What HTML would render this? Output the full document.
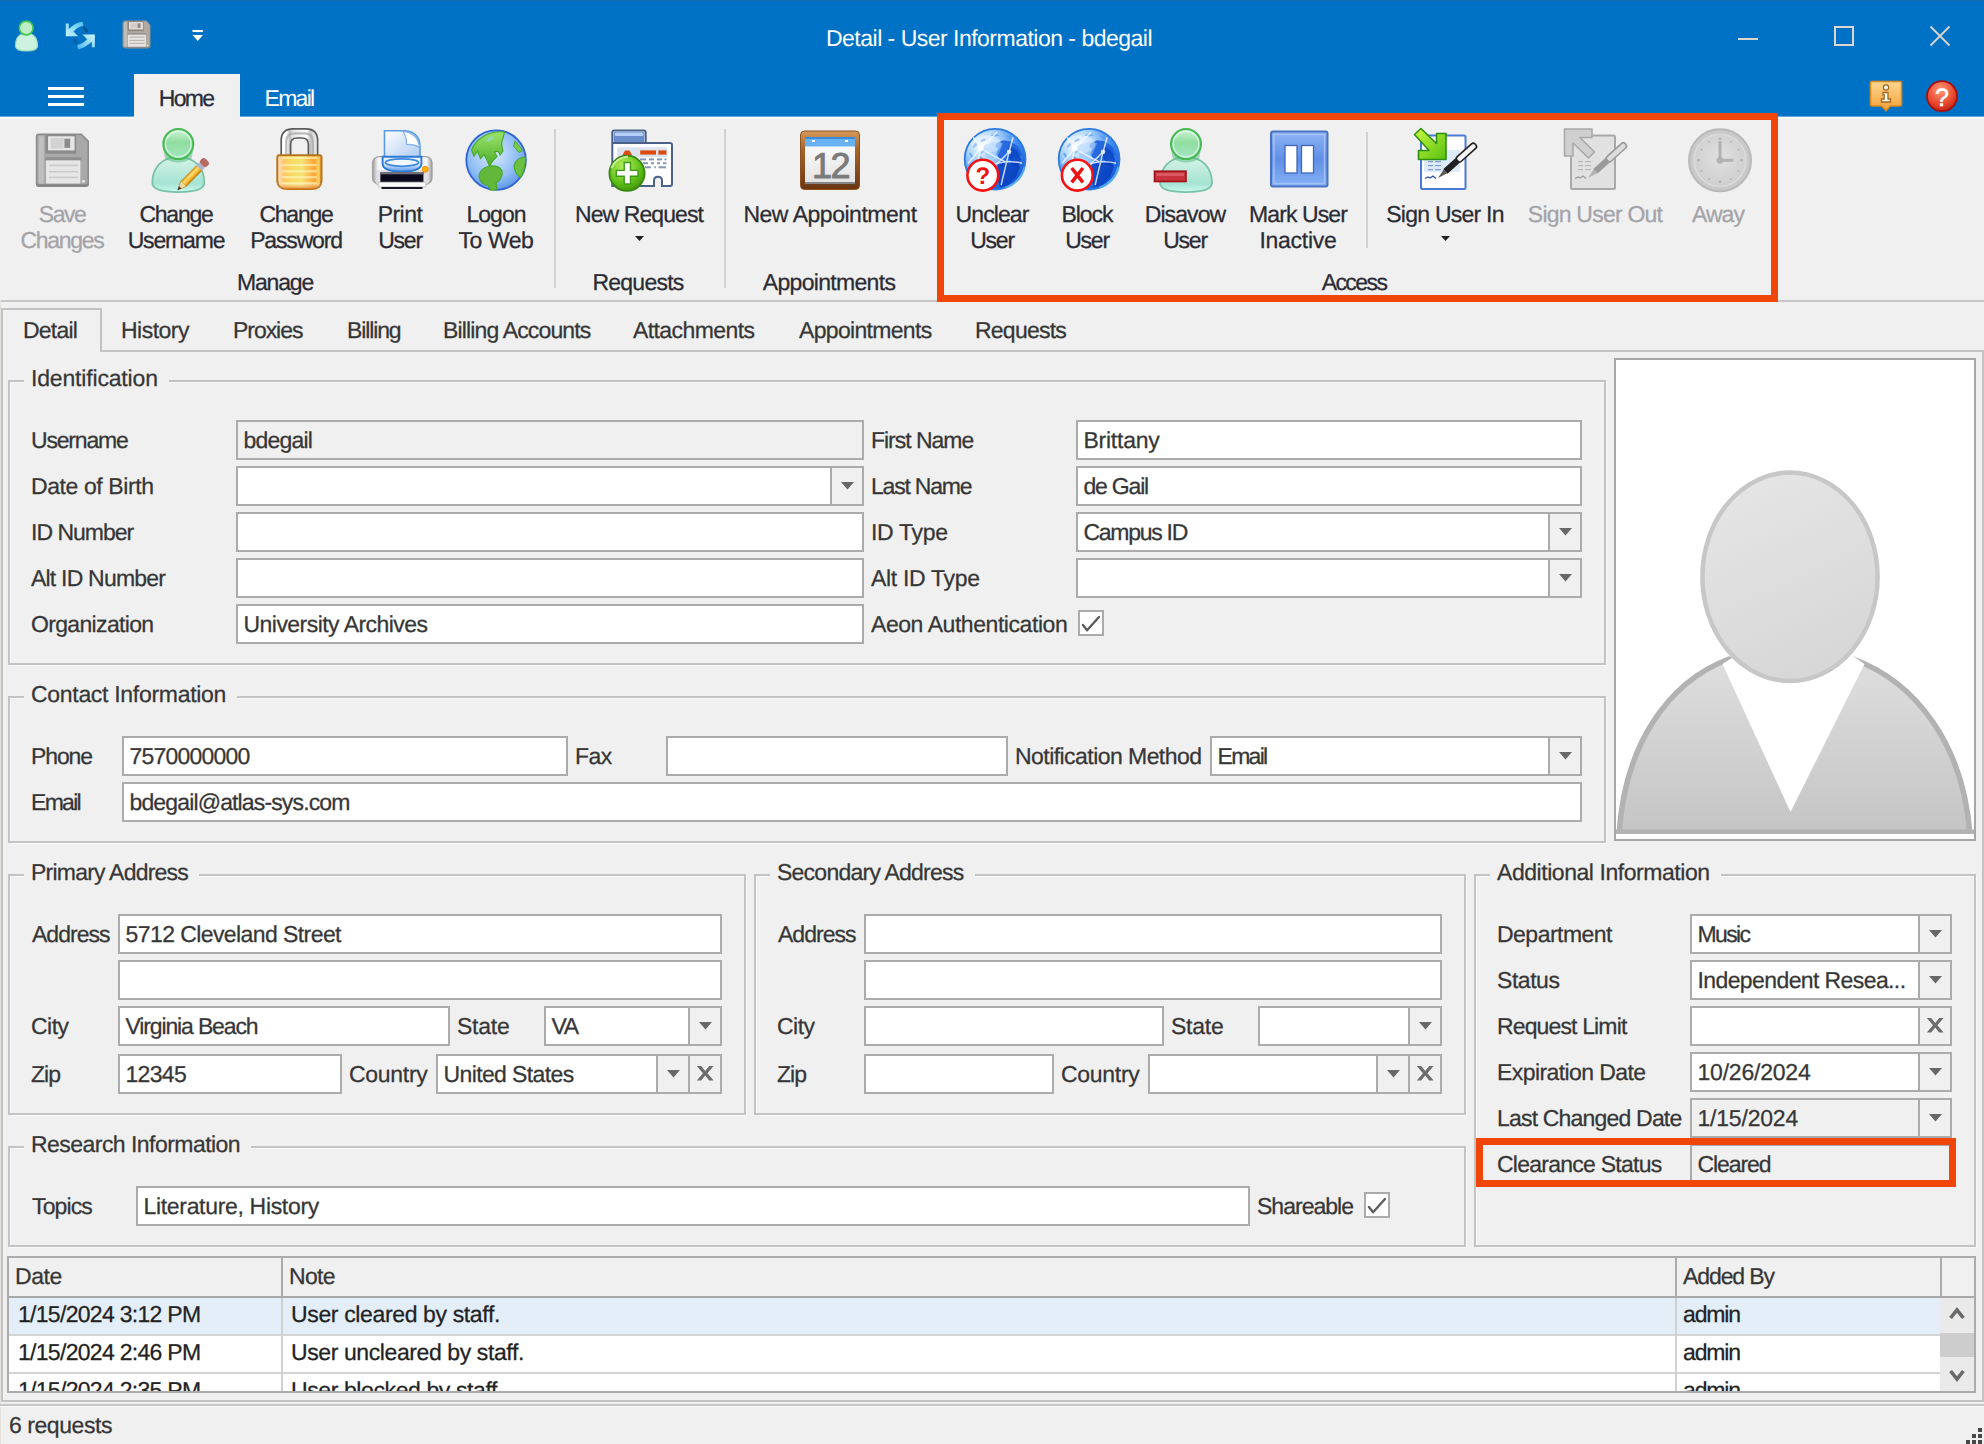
<!DOCTYPE html>
<html><head><meta charset="utf-8"><title>Detail - User Information - bdegail</title>
<style>
html,body{margin:0;padding:0;background:#f0f0f0;}
body{text-rendering:geometricPrecision;width:1984px;height:1444px;overflow:hidden;font-family:"Liberation Sans",sans-serif;}
#app{position:relative;width:1984px;height:1444px;overflow:hidden;background:#f0f0f0;font-size:23px;line-height:26px;color:#333;}
.t{position:absolute;white-space:nowrap;font-size:23px;line-height:26px;color:#363636;-webkit-text-stroke:0.25px currentColor;}
.t.c{text-align:center;}
.t.w{color:#fff;-webkit-text-stroke:0;}
.t.d{color:#a3a3a8;}
.t.gt{background:#f0f0f0;padding:0 11px 0 7px;margin-left:-7px;}
.r{position:absolute;}
.in{position:absolute;box-sizing:border-box;border:2px solid #ababab;background:#fff;}
.in.g{background:#f0f0f0;}
.gb{position:absolute;box-sizing:border-box;border:2px solid #c3c3c3;box-shadow:inset 1px 1px 0 #f8f8f8, 1px 1px 0 #f8f8f8;}
svg{display:block;overflow:visible;}
.t.rb{color:#2b2b33;}

</style></head>
<body>
<div id="app">
<div class="r" style="left:0px;top:0px;width:1984px;height:116px;background:#0072c6;"></div>
<div class="r" style="left:0px;top:0px;width:1984px;height:1px;background:#1a68ac;"></div>
<div class="t w c" style="left:789px;top:25.4px;width:400px;letter-spacing:-0.51px;">Detail - User Information - bdegail</div>
<div class="r" style="left:1738px;top:38px;width:20px;height:2px;background:#dcd6cf;"></div>
<div class="r" style="left:1834px;top:26px;width:16px;height:16px;border:2px solid #dcd6cf"></div>
<svg class="r" style="left:1930px;top:26px" width="20" height="20" viewBox="0 0 20 20"><path d="M0.5 0.5L19.5 19.5M19.5 0.5L0.5 19.5" stroke="#dcd6cf" stroke-width="1.8" fill="none"/></svg>
<div class="r" style="left:48px;top:87px;width:36px;height:3px;background:#fff;"></div>
<div class="r" style="left:48px;top:95px;width:36px;height:3px;background:#fff;"></div>
<div class="r" style="left:48px;top:103px;width:36px;height:3px;background:#fff;"></div>
<div class="r" style="left:134px;top:74px;width:106px;height:43px;background:#f0f0f0;"></div>
<div class="t  c" style="left:-14px;top:85.4px;width:400px;letter-spacing:-1.71px;color:#2b2b3b">Home</div>
<div class="t w c" style="left:89px;top:85.4px;width:400px;letter-spacing:-1.70px;">Email</div>
<div class="r" style="left:0px;top:116px;width:134px;height:1px;background:#63a8da;"></div>
<div class="r" style="left:0px;top:117px;width:134px;height:2px;background:#faf8f6;"></div>
<div class="r" style="left:240px;top:116px;width:1744px;height:1px;background:#63a8da;"></div>
<div class="r" style="left:240px;top:117px;width:1744px;height:2px;background:#faf8f6;"></div>
<div class="r" style="left:0px;top:300px;width:1984px;height:2px;background:#c6c6c6;"></div>
<svg class="r" style="left:0;top:0" width="1984" height="300" viewBox="0 0 1984 300">
<defs>
<linearGradient id="gHead" x1="0" y1="0" x2="0" y2="1"><stop offset="0" stop-color="#d2f4d8"/><stop offset="0.45" stop-color="#8fdd9f"/><stop offset="1" stop-color="#a6e6c4"/></linearGradient>
<linearGradient id="gBody" x1="0" y1="0" x2="0" y2="1"><stop offset="0" stop-color="#d6f3e6"/><stop offset="0.75" stop-color="#a4e3d2"/><stop offset="1" stop-color="#cdf8ee"/></linearGradient>
<linearGradient id="gLock" x1="0" y1="0" x2="1" y2="0"><stop offset="0" stop-color="#f39a2a"/><stop offset="0.25" stop-color="#ffd45a"/><stop offset="0.5" stop-color="#fff0a0"/><stop offset="0.8" stop-color="#ffc850"/><stop offset="1" stop-color="#e8902a"/></linearGradient>
<linearGradient id="gShk" x1="0" y1="0" x2="1" y2="0"><stop offset="0" stop-color="#8c8c8c"/><stop offset="0.35" stop-color="#f4f4f4"/><stop offset="0.7" stop-color="#d0d0d0"/><stop offset="1" stop-color="#8a8a8a"/></linearGradient>
<radialGradient id="gGlobe" cx="0.3" cy="0.26" r="0.85"><stop offset="0" stop-color="#f4faff"/><stop offset="0.3" stop-color="#b4d8fc"/><stop offset="0.62" stop-color="#4a94f2"/><stop offset="1" stop-color="#0c50d2"/></radialGradient>
<radialGradient id="gEarth" cx="0.45" cy="0.4" r="0.7"><stop offset="0" stop-color="#d8eaff"/><stop offset="0.6" stop-color="#8fbdf5"/><stop offset="1" stop-color="#4a86e0"/></radialGradient>
<linearGradient id="gLand" x1="0" y1="0" x2="0" y2="1"><stop offset="0" stop-color="#9be36a"/><stop offset="1" stop-color="#4fae2a"/></linearGradient>
<radialGradient id="gPlus" cx="0.4" cy="0.3" r="0.8"><stop offset="0" stop-color="#b8f060"/><stop offset="0.6" stop-color="#5fc018"/><stop offset="1" stop-color="#3a8a0a"/></radialGradient>
<linearGradient id="gCal" x1="0" y1="0" x2="0" y2="1"><stop offset="0" stop-color="#d79a5a"/><stop offset="0.3" stop-color="#a8662c"/><stop offset="1" stop-color="#6b3510"/></linearGradient>
<linearGradient id="gCalP" x1="0" y1="0" x2="0" y2="1"><stop offset="0" stop-color="#ffffff"/><stop offset="1" stop-color="#e2e2e2"/></linearGradient>
<linearGradient id="gPause" x1="0" y1="0" x2="0" y2="1"><stop offset="0" stop-color="#8fb4f4"/><stop offset="0.5" stop-color="#5f8fe6"/><stop offset="1" stop-color="#86b0f6"/></linearGradient>
<linearGradient id="gPaper" x1="0" y1="0" x2="1" y2="1"><stop offset="0" stop-color="#ffffff"/><stop offset="1" stop-color="#a8c8f0"/></linearGradient>
<linearGradient id="gPrn" x1="0" y1="0" x2="0" y2="1"><stop offset="0" stop-color="#ffffff"/><stop offset="1" stop-color="#c4c4cc"/></linearGradient>
<radialGradient id="gClock" cx="0.5" cy="0.45" r="0.6"><stop offset="0" stop-color="#e0e0e0"/><stop offset="1" stop-color="#cdcdcd"/></radialGradient>
<radialGradient id="gHelp" cx="0.45" cy="0.3" r="0.8"><stop offset="0" stop-color="#ff9a78"/><stop offset="0.6" stop-color="#e8452c"/><stop offset="1" stop-color="#b81810"/></radialGradient>
<linearGradient id="gInfo" x1="0" y1="0" x2="0" y2="1"><stop offset="0" stop-color="#ffd890"/><stop offset="1" stop-color="#f0a038"/></linearGradient>
<linearGradient id="gPencil" x1="0" y1="0" x2="0" y2="1"><stop offset="0" stop-color="#c88818"/><stop offset="0.35" stop-color="#ffe070"/><stop offset="0.7" stop-color="#f4b428"/><stop offset="1" stop-color="#b86c10"/></linearGradient>
<linearGradient id="gArrow" x1="0" y1="0" x2="1" y2="1"><stop offset="0" stop-color="#c8f840"/><stop offset="1" stop-color="#58c010"/></linearGradient>
</defs>
<path d="M15.5 46C15.5 38 19 33.5 26.5 33.5C34 33.5 37.5 38 37.5 46C37.5 49.5 32 51 26.5 51C21 51 15.5 49.5 15.5 46Z" fill="#cdf2de" stroke="#9fdcc0" stroke-width="1.2"/>
<circle cx="26.2" cy="28" r="6.9" fill="#bdeec6" stroke="#43c64e" stroke-width="1.6"/>
<defs><linearGradient id="gRf1" x1="0" y1="1" x2="1" y2="0"><stop offset="0" stop-color="#c9f5ff"/><stop offset="1" stop-color="#4fbff0"/></linearGradient><linearGradient id="gRf2" x1="1" y1="0" x2="0" y2="1"><stop offset="0" stop-color="#d6f6ff"/><stop offset="1" stop-color="#45b8ee"/></linearGradient></defs>
<path d="M83.5 27A8 8 0 0 1 86.8 32.5" stroke="#0b4778" stroke-width="2.6" fill="none" opacity="0.7"/><path d="M77.2 43.8A8 8 0 0 1 74 38.8" stroke="#0b4778" stroke-width="2.6" fill="none" opacity="0.5"/>
<path d="M65.8 23.6H68.8V29Q75 23 82.5 21.6L83.4 25.8Q77.5 27 73.5 31.5L78.2 36.3H65.8Z" fill="url(#gRf1)"/>
<path d="M94.8 47.2H91.8V41.8Q85.6 47.8 78.1 49.2L77.2 45Q83.1 43.8 87.1 39.3L82.4 34.5H94.8Z" fill="url(#gRf2)"/>
<path d="M125.2 21H146.355L150 24.645V45.8Q150 48 147.8 48H125.2Q123 48 123 45.8V23.2Q123 21 125.2 21Z" fill="#b1aaa3" stroke="#9a928a" stroke-width="1.00"/>
<rect x="124.08" y="22.08" width="2.7" height="24.84" fill="#c4c4c4" opacity="0.8"/>
<rect x="123.0" y="46.785" width="27" height="1.2149999999999999" rx="1" fill="#828282" opacity="0.7"/>
<rect x="127.536" y="21.0" width="16.2" height="10.125" fill="#8f8780"/>
<rect x="128.994" y="22.08" width="13.878" height="7.344" fill="#e6e4e2"/>
<rect x="130.398" y="23.025" width="6.75" height="5.4" fill="#d2cdc9"/>
<rect x="137.553" y="23.322" width="3.024" height="4.779" fill="#8f8780"/>
<rect x="127.536" y="33.015" width="18.9" height="1.6199999999999999" fill="#8f8780" opacity="0.85"/>
<rect x="127.941" y="34.635" width="17.955000000000002" height="12.015" fill="#e6e4e2"/>
<rect x="129.48" y="36.519" width="15.120000000000001" height="1.20" fill="#bcb6b0"/>
<rect x="129.48" y="39.785999999999994" width="15.120000000000001" height="1.20" fill="#bcb6b0"/>
<rect x="129.48" y="42.782999999999994" width="15.120000000000001" height="1.20" fill="#bcb6b0"/>
<rect x="146.895" y="44.894999999999996" width="1.2149999999999999" height="1.2149999999999999" fill="#f4f4f4"/>
<rect x="192.5" y="30" width="10.5" height="2" fill="#fff"/><path d="M192.5 35H203L197.75 41Z" fill="#fff"/>
<path d="M1872 81.5H1900Q1901.5 81.5 1901.5 83V104.5Q1901.5 106 1900 106H1890.5L1886 110.5L1881.5 106H1872Q1870.5 106 1870.5 104.5V83Q1870.5 81.5 1872 81.5Z" fill="url(#gInfo)" stroke="#d98a1e" stroke-width="1.6"/>
<circle cx="1886" cy="87.5" r="2.6" fill="#fff" stroke="#a8651a" stroke-width="1.3"/><path d="M1883 92.5H1888V99H1890.5V102H1881.5V99H1884.2V95H1883Z" fill="#fff" stroke="#a8651a" stroke-width="1.3"/>
<circle cx="1942" cy="96.2" r="15" fill="url(#gHelp)" stroke="#a31010" stroke-width="1.8"/>
<text x="1942" y="105.5" text-anchor="middle" font-family="Liberation Sans" font-size="25" fill="#fff" stroke="#fff" stroke-width="0.5">?</text>
<path d="M38.800000000000004 134.2H81.23400000000001L88.2 141.166V183.9Q88.2 186.1 86.0 186.1H38.800000000000004Q36.6 186.1 36.6 183.9V136.39999999999998Q36.6 134.2 38.800000000000004 134.2Z" fill="#a9a9a9" stroke="#8a8a8a" stroke-width="1.55"/>
<rect x="38.664" y="136.27599999999998" width="5.16" height="47.748000000000005" fill="#c4c4c4" opacity="0.8"/>
<rect x="36.6" y="183.7645" width="51.6" height="2.3355" rx="1" fill="#828282" opacity="0.7"/>
<rect x="45.2688" y="134.2" width="30.96" height="19.462500000000002" fill="#8b8b8b"/>
<rect x="48.0552" y="136.27599999999998" width="26.5224" height="14.116800000000003" fill="#e6e6e6"/>
<rect x="50.7384" y="138.0925" width="12.9" height="10.380000000000003" fill="#d2d2d2"/>
<rect x="64.4124" y="138.6634" width="5.7792" height="9.186300000000001" fill="#8b8b8b"/>
<rect x="45.2688" y="157.2955" width="36.12" height="3.1140000000000003" fill="#8b8b8b" opacity="0.85"/>
<rect x="46.0428" y="160.40949999999998" width="34.314" height="23.0955" fill="#e6e6e6"/>
<rect x="48.984" y="164.58429999999998" width="28.896000000000004" height="1.56" fill="#c9c9c9"/>
<rect x="48.984" y="170.8642" width="28.896000000000004" height="1.56" fill="#c9c9c9"/>
<rect x="48.984" y="176.6251" width="28.896000000000004" height="1.56" fill="#c9c9c9"/>
<rect x="82.266" y="180.1315" width="2.322" height="2.3355" fill="#f4f4f4"/>
<path d="M152.3 183.1C152.3 167.1 162.18 157.1 178.3 157.1C194.42000000000002 157.1 204.3 167.1 204.3 183.1C204.3 190.1 191.3 192.1 178.3 192.1C165.3 192.1 152.3 190.1 152.3 183.1Z" fill="url(#gBody)" stroke="#79c2a8" stroke-width="1.8"/>
<path d="M163.3 150.1A16.5 16.5 0 0 0 193.3 150.1L191.3 159.1Q178.3 166.1 165.3 159.1Z" fill="#5fbd86" opacity="0.55"/>
<circle cx="178.3" cy="144.1" r="15.0" fill="url(#gHead)" stroke="#46b855" stroke-width="2.0"/>
<circle cx="178.3" cy="144.1" r="12.8" fill="none" stroke="#e4fae8" stroke-width="1.2" opacity="0.8"/>
<g transform="translate(177.6 190) rotate(-45.6)">
<path d="M0 0L9 -4.0V4.0Z" fill="#f0d8a0" stroke="#a87820" stroke-width="0.6"/>
<path d="M0 0L3.6 -1.6V1.6Z" fill="#303038"/>
<rect x="9" y="-4.0" width="21.88307911884438" height="8" fill="url(#gPencil)"/>
<rect x="30.88307911884438" y="-4.0" width="4" height="8" fill="#aab6cf"/>
<rect x="34.88307911884438" y="-4.5" width="7" height="9" rx="3" fill="#b56a62"/>
</g>
<defs><linearGradient id="gShk2" x1="0" y1="0" x2="1" y2="0"><stop offset="0" stop-color="#ffffff"/><stop offset="0.16" stop-color="#ffffff"/><stop offset="0.24" stop-color="#b9b9b9"/><stop offset="0.3" stop-color="#e4e4e4"/><stop offset="0.7" stop-color="#ffffff"/><stop offset="0.8" stop-color="#c4c4c4"/><stop offset="1" stop-color="#f4f4f4"/></linearGradient><linearGradient id="gLk2" x1="0" y1="0" x2="1" y2="0"><stop offset="0" stop-color="#ffe9d4"/><stop offset="0.14" stop-color="#ffc46a"/><stop offset="0.3" stop-color="#f8d860"/><stop offset="0.55" stop-color="#f6e274"/><stop offset="0.85" stop-color="#ffa234"/><stop offset="0.93" stop-color="#ffd060"/><stop offset="1" stop-color="#f0a030"/></linearGradient><linearGradient id="gLk3" x1="0" y1="0" x2="0" y2="1"><stop offset="0" stop-color="#fff" stop-opacity="0"/><stop offset="0.8" stop-color="#fff" stop-opacity="0"/><stop offset="1" stop-color="#e07818" stop-opacity="0.9"/></linearGradient></defs>
<path fill-rule="evenodd" d="M281.2 157V140.5Q281.2 128.8 293 128.8H306Q317.6 128.8 317.6 140.5V157H308.4V144.5Q308.4 138 302 138H297Q290.6 138 290.6 144.5V157Z" fill="url(#gShk2)" stroke="#5c5c5c" stroke-width="1.7"/>
<path d="M286.2 156V141.5Q286.2 133.4 294.5 133.4H304.5Q312.8 133.4 312.8 141.5V156" fill="none" stroke="#a8a8a8" stroke-width="2.2" opacity="0.75"/>
<path d="M279.3 155.3H319.5Q321.5 155.3 321.5 157.3V180Q321.5 189 311 189H288Q277.3 189 277.3 180V157.3Q277.3 155.3 279.3 155.3Z" fill="url(#gLk2)" stroke="#b9751b" stroke-width="2"/>
<path d="M279.3 155.3H319.5Q321.5 155.3 321.5 157.3V180Q321.5 189 311 189H288Q277.3 189 277.3 180V157.3Q277.3 155.3 279.3 155.3Z" fill="url(#gLk3)"/>
<rect x="282" y="156.70000000000002" width="35" height="2.2" fill="#fffbc8" opacity="0.6"/>
<rect x="282" y="163.9" width="35" height="2.2" fill="#fffbc8" opacity="0.6"/>
<rect x="282" y="170.20000000000002" width="35" height="2.2" fill="#fffbc8" opacity="0.6"/>
<rect x="282" y="176.1" width="35" height="2.2" fill="#fffbc8" opacity="0.6"/>
<rect x="282" y="182.20000000000002" width="35" height="2.2" fill="#fffbc8" opacity="0.6"/>
<defs><linearGradient id="gTray" x1="0" y1="0" x2="0" y2="1"><stop offset="0" stop-color="#f4f9ff"/><stop offset="0.55" stop-color="#cfe2f8"/><stop offset="1" stop-color="#4f96e8"/></linearGradient><linearGradient id="gPrnB" x1="0" y1="0" x2="1" y2="0"><stop offset="0" stop-color="#9c9c9c"/><stop offset="0.09" stop-color="#f6f6f6"/><stop offset="0.91" stop-color="#f6f6f6"/><stop offset="1" stop-color="#9c9c9c"/></linearGradient></defs>
<path d="M384.5 130.8H405Q420 132 420 147V160H384.5Z" fill="url(#gPaper)" stroke="#5b9be2" stroke-width="1.6"/>
<path d="M403 131.3Q407 138 406.5 144.5Q414 144 419.5 147.5Q418 133 403 131.3Z" fill="#fff" stroke="#7fb0ea" stroke-width="1.2"/>
<rect x="372.6" y="156.6" width="59.4" height="27.6" rx="6.5" fill="url(#gPrnB)" stroke="#a2a2a2" stroke-width="1.4"/>
<rect x="376" y="170" width="52" height="14" fill="#d9d9de" opacity="0.7"/>
<path d="M382.6 156.8H421.4V163.5Q421.4 171.6 402 171.6Q382.6 171.6 382.6 163.5Z" fill="url(#gTray)" stroke="#2b7ad8" stroke-width="1.9"/>
<ellipse cx="402" cy="162.6" rx="16.5" ry="3.7" fill="#f2f8ff" stroke="#3e88e0" stroke-width="1.8"/>
<circle cx="425.2" cy="169.3" r="3" fill="#ffb400" stroke="#f08000" stroke-width="0.8"/>
<rect x="380" y="172" width="44" height="2.4" fill="#70707c"/>
<rect x="380.4" y="174.2" width="43" height="8" fill="#0a0a1c"/>
<rect x="378.2" y="182.2" width="47.6" height="4.8" rx="1.5" fill="#fafafa" stroke="#b4b4b4" stroke-width="0.8"/>
<rect x="381.5" y="187" width="41" height="2" fill="#181824"/>
<circle cx="496.1" cy="160.1" r="29.8" fill="url(#gEarth)" stroke="#2d63d2" stroke-width="1.8"/>
<path d="M504.5 132Q497 131 488 134Q476 139 471.5 150L474 156L477.5 151L480.5 158.5L484 154.5Q487 160 489.5 166Q492.5 160 497 156.5L494.5 152Q499 150 500 155L503 151Q500.5 143 503 138Z" fill="url(#gLand)" stroke="#4aa828" stroke-width="1.2"/>
<path d="M489.5 166Q480 168 479 176Q480 184 488 185.5L490.5 190H497L496 183Q503.5 178 502 171Q499 165 489.5 166Z" fill="#62b83a" stroke="#4aa828" stroke-width="1.2"/>
<path d="M525.5 157Q516 157.5 514 166Q515 174 520.5 177.5Q525.5 170 525.5 157Z" fill="#6cc044" stroke="#4aa828" stroke-width="1.2"/>
<path d="M515 141L519.5 146.5L522.5 150.5L519 152.5L513.5 146Z" fill="#7ccc4c" stroke="#4aa828" stroke-width="1"/>
<ellipse cx="490" cy="139" rx="4" ry="2" fill="#8fd8a8" transform="rotate(-30 490 139)"/>
<path d="M614.3 130.5H643.7Q645.7 130.5 645.7 132.5V143H670Q672 143 672 145V184Q672 186 670 186H662V180.5Q662 176.7 658 176.7Q654 176.7 654 180.5V186H612.3V132.5Q612.3 130.5 614.3 130.5Z" fill="#fff" stroke="#4a6288" stroke-width="2"/>
<rect x="613.6" y="131.8" width="30.8" height="10.5" rx="1.5" fill="#6a8cc8"/><rect x="614.6" y="132.6" width="28.8" height="3.4" rx="1.5" fill="#b4d0fa"/>
<rect x="612.3" y="142" width="34" height="2" fill="#4a6288"/>
<rect x="617" y="147.3" width="50.5" height="10" rx="2" fill="#dde3ee"/>
<rect x="640.2" y="150.4" width="15.8" height="4.2" fill="#dd4a0e"/><rect x="658.4" y="150.4" width="8" height="4.2" fill="#dd4a0e"/><path d="M622.5 155L625 150.4H629.5L632 155Z" fill="#dd4a0e"/>
<rect x="640" y="158.4" width="6" height="2" fill="#8797b6"/>
<rect x="649" y="158.4" width="5" height="2" fill="#8797b6"/>
<rect x="657" y="158.4" width="5" height="2" fill="#8797b6"/>
<rect x="664.5" y="158.4" width="2" height="2" fill="#8797b6"/>
<rect x="643" y="162.2" width="5" height="2" fill="#8797b6"/>
<rect x="651" y="162.2" width="3" height="2" fill="#8797b6"/>
<rect x="657" y="162.2" width="3" height="2" fill="#8797b6"/>
<rect x="663" y="162.2" width="3.5" height="2" fill="#8797b6"/>
<rect x="645" y="166.3" width="6" height="2" fill="#8797b6"/>
<rect x="654.5" y="166.3" width="1.5" height="2" fill="#8797b6"/>
<rect x="658.5" y="166.3" width="7.5" height="2" fill="#8797b6"/>
<circle cx="627" cy="173.3" r="17.6" fill="url(#gPlus)" stroke="#3a8612" stroke-width="1.8"/>
<path d="M611.5 168Q616 157.5 628 156.5" stroke="#e8ffc0" stroke-width="2" fill="none" opacity="0.7"/>
<path d="M624.2 162.5H630.5V170.4H638V176.2H630.5V184H624.2V176.2H616.3V170.4H624.2Z" fill="#fff" stroke="#3c9a14" stroke-width="1.4"/>
<rect x="800.5" y="131" width="59" height="58.5" rx="4" fill="url(#gCal)" stroke="#8a5220" stroke-width="1"/>
<rect x="805" y="137" width="50" height="47" fill="url(#gCalP)"/>
<rect x="805" y="137" width="50" height="9.5" fill="#69b2f2"/><rect x="805" y="137" width="50" height="2" fill="#3a8ae0"/>
<rect x="812" y="140" width="3" height="2" fill="#fff"/><rect x="845" y="140" width="3" height="2" fill="#fff"/>
<rect x="805" y="182" width="50" height="2.5" fill="#4a4a4a" opacity="0.6"/>
<text x="830.5" y="178" text-anchor="middle" font-family="Liberation Sans" font-size="36" fill="#7a7a7a" stroke="#7a7a7a" stroke-width="0.9" letter-spacing="-1.5">12</text>
<circle cx="995.1" cy="159.2" r="30.4" fill="url(#gGlobe)" stroke="#2c7ae2" stroke-width="1.8"/>
<path d="M997.1 143.2l6 -3l7 1l8 5l4 8l-3 4l-5 -2l-3 4l-6 1l-2 5l-5 -1l1 -7l-3 -4l2 -5l-3 -3z" fill="#1c60dc" opacity="0.9"/>
<path d="M1009.1 146.2l8 4l4 9l-2 7l-7 -1l-2 -6l-4 -4z" fill="#0a46c6" opacity="0.85"/>
<path d="M997.1 165.2l8 -3l12 -1l3 6l-4 10l-8 8l-8 2l-3 -8l1 -8z" fill="#0840be" opacity="0.85"/>
<path d="M1001.1 155.2l5 -1l-2 6l-5 3z" fill="#2a6ee4" opacity="0.8"/>
<ellipse cx="975.1" cy="145.2" rx="3.5" ry="1.5" fill="#5a9cf0" opacity="0.75" transform="rotate(-50 975.1 145.2)"/>
<ellipse cx="983.1" cy="140.2" rx="3.0" ry="1.2" fill="#5a9cf0" opacity="0.75" transform="rotate(-25 983.1 140.2)"/>
<ellipse cx="971.1" cy="155.2" rx="3.0" ry="1.3" fill="#5a9cf0" opacity="0.75" transform="rotate(60 971.1 155.2)"/>
<ellipse cx="983.1" cy="151.2" rx="3.5" ry="1.3" fill="#5a9cf0" opacity="0.75" transform="rotate(-35 983.1 151.2)"/>
<ellipse cx="981.1" cy="159.2" rx="3.0" ry="1.5" fill="#5a9cf0" opacity="0.75" transform="rotate(70 981.1 159.2)"/>
<ellipse cx="995.1" cy="135.2" rx="4.0" ry="1.0" fill="#5a9cf0" opacity="0.75" transform="rotate(0 995.1 135.2)"/>
<ellipse cx="1009.1" cy="137.2" rx="3.0" ry="1.2" fill="#5a9cf0" opacity="0.75" transform="rotate(25 1009.1 137.2)"/>
<path d="M983.1 146.2q10 -6 20 -3l-6 14q-8 4 -12 -1z" fill="#8cc2ff" opacity="0.55"/>
<path d="M980.6 148.2L968.1 163.2M980.6 148.2L973.1 137.2M980.6 148.2L997.1 132.2M980.6 148.2Q995.1 157.2 1005.1 161.7M980.6 148.2L977.1 167.2" stroke="#f4faff" stroke-width="1.5" fill="none" opacity="0.8"/>
<path d="M1009.1 151.7L1013.1 137.2M1009.1 151.7L1001.1 185.2M1009.1 151.7Q997.1 165.2 987.1 169.2M997.1 163.2Q1011.1 160.2 1022.1 163.2" stroke="#f4faff" stroke-width="1.5" fill="none" opacity="0.8"/>
<circle cx="980.6" cy="148.2" r="2.6" fill="#fff" opacity="0.9"/><circle cx="1009.1" cy="151.7" r="2.2" fill="#eaf4ff" opacity="0.9"/>
<ellipse cx="986.1" cy="144.2" rx="15" ry="9" fill="#fff" opacity="0.3"/>
<path d="M1005.4 187.8A30.4 30.4 0 0 0 1024.6 167.1" stroke="#58b2f6" stroke-width="2.2" fill="none" opacity="0.85"/>
<circle cx="982.8" cy="175.2" r="15.4" fill="#fff" stroke="#f41212" stroke-width="2.6"/>
<text x="982.8" y="183.7" text-anchor="middle" font-family="Liberation Sans" font-weight="bold" font-size="24" fill="#f41212">?</text>
<circle cx="1089.1" cy="159.2" r="30.4" fill="url(#gGlobe)" stroke="#2c7ae2" stroke-width="1.8"/>
<path d="M1091.1 143.2l6 -3l7 1l8 5l4 8l-3 4l-5 -2l-3 4l-6 1l-2 5l-5 -1l1 -7l-3 -4l2 -5l-3 -3z" fill="#1c60dc" opacity="0.9"/>
<path d="M1103.1 146.2l8 4l4 9l-2 7l-7 -1l-2 -6l-4 -4z" fill="#0a46c6" opacity="0.85"/>
<path d="M1091.1 165.2l8 -3l12 -1l3 6l-4 10l-8 8l-8 2l-3 -8l1 -8z" fill="#0840be" opacity="0.85"/>
<path d="M1095.1 155.2l5 -1l-2 6l-5 3z" fill="#2a6ee4" opacity="0.8"/>
<ellipse cx="1069.1" cy="145.2" rx="3.5" ry="1.5" fill="#5a9cf0" opacity="0.75" transform="rotate(-50 1069.1 145.2)"/>
<ellipse cx="1077.1" cy="140.2" rx="3.0" ry="1.2" fill="#5a9cf0" opacity="0.75" transform="rotate(-25 1077.1 140.2)"/>
<ellipse cx="1065.1" cy="155.2" rx="3.0" ry="1.3" fill="#5a9cf0" opacity="0.75" transform="rotate(60 1065.1 155.2)"/>
<ellipse cx="1077.1" cy="151.2" rx="3.5" ry="1.3" fill="#5a9cf0" opacity="0.75" transform="rotate(-35 1077.1 151.2)"/>
<ellipse cx="1075.1" cy="159.2" rx="3.0" ry="1.5" fill="#5a9cf0" opacity="0.75" transform="rotate(70 1075.1 159.2)"/>
<ellipse cx="1089.1" cy="135.2" rx="4.0" ry="1.0" fill="#5a9cf0" opacity="0.75" transform="rotate(0 1089.1 135.2)"/>
<ellipse cx="1103.1" cy="137.2" rx="3.0" ry="1.2" fill="#5a9cf0" opacity="0.75" transform="rotate(25 1103.1 137.2)"/>
<path d="M1077.1 146.2q10 -6 20 -3l-6 14q-8 4 -12 -1z" fill="#8cc2ff" opacity="0.55"/>
<path d="M1074.6 148.2L1062.1 163.2M1074.6 148.2L1067.1 137.2M1074.6 148.2L1091.1 132.2M1074.6 148.2Q1089.1 157.2 1099.1 161.7M1074.6 148.2L1071.1 167.2" stroke="#f4faff" stroke-width="1.5" fill="none" opacity="0.8"/>
<path d="M1103.1 151.7L1107.1 137.2M1103.1 151.7L1095.1 185.2M1103.1 151.7Q1091.1 165.2 1081.1 169.2M1091.1 163.2Q1105.1 160.2 1116.1 163.2" stroke="#f4faff" stroke-width="1.5" fill="none" opacity="0.8"/>
<circle cx="1074.6" cy="148.2" r="2.6" fill="#fff" opacity="0.9"/><circle cx="1103.1" cy="151.7" r="2.2" fill="#eaf4ff" opacity="0.9"/>
<ellipse cx="1080.1" cy="144.2" rx="15" ry="9" fill="#fff" opacity="0.3"/>
<path d="M1099.4 187.8A30.4 30.4 0 0 0 1118.6 167.1" stroke="#58b2f6" stroke-width="2.2" fill="none" opacity="0.85"/>
<circle cx="1077.3" cy="175.2" r="15.4" fill="#fff" stroke="#f41212" stroke-width="2.6"/>
<path d="M1071.7 168.0L1082.8999999999999 182.39999999999998M1082.8999999999999 168.0L1071.7 182.39999999999998" stroke="#ee1111" stroke-width="3.5" fill="none"/>
<path d="M1160.0 183.1C1160.0 167.1 1169.88 157.1 1186 157.1C1202.12 157.1 1212.0 167.1 1212.0 183.1C1212.0 190.1 1199.0 192.1 1186 192.1C1173.0 192.1 1160.0 190.1 1160.0 183.1Z" fill="url(#gBody)" stroke="#79c2a8" stroke-width="1.8"/>
<path d="M1171.0 150.1A16.5 16.5 0 0 0 1201.0 150.1L1199.0 159.1Q1186 166.1 1173.0 159.1Z" fill="#5fbd86" opacity="0.55"/>
<circle cx="1186" cy="144.1" r="15.0" fill="url(#gHead)" stroke="#46b855" stroke-width="2.0"/>
<circle cx="1186" cy="144.1" r="12.8" fill="none" stroke="#e4fae8" stroke-width="1.2" opacity="0.8"/>
<rect x="1154.5" y="171.2" width="31.5" height="10.3" fill="#c8323c" stroke="#a01018" stroke-width="1.6"/><rect x="1156.5" y="173" width="27.5" height="3" fill="#e06a70" opacity="0.7"/>
<rect x="1271" y="131.5" width="56.5" height="55" rx="2" fill="url(#gPause)" stroke="#4a72c4" stroke-width="2"/>
<rect x="1274" y="134.5" width="50.5" height="49" fill="none" stroke="#a9c6f8" stroke-width="1.5" opacity="0.8"/>
<rect x="1285" y="145.5" width="12" height="27.5" fill="#fff" stroke="#3f66b8" stroke-width="1.3"/><rect x="1301.5" y="145.5" width="12" height="27.5" fill="#fff" stroke="#3f66b8" stroke-width="1.3"/>
<rect x="1421" y="135.5" width="44.5" height="53.5" rx="1.5" fill="#fff" stroke="#4b79da" stroke-width="2"/>
<rect x="1424" y="150" width="36" height="22" fill="#d4e6fb" opacity="0.8"/>
<rect x="1428" y="161" width="5" height="1.2" fill="#7f9cd0"/><rect x="1435" y="161" width="6" height="1.2" fill="#7f9cd0"/>
<rect x="1428" y="165" width="5" height="1.2" fill="#7f9cd0"/><rect x="1435" y="165" width="6" height="1.2" fill="#7f9cd0"/>
<rect x="1428" y="169" width="5" height="1.2" fill="#7f9cd0"/><rect x="1435" y="169" width="6" height="1.2" fill="#7f9cd0"/>
<path d="M1425 178.5l3 -1.5l2 1l3 -2l3 2.5" stroke="#3050b0" stroke-width="1.2" fill="none"/>
<path d="M1414.5 134.5L1421 128.5L1436.5 143.5V133.5H1446V159.5H1418.5V150.5H1429Z" fill="url(#gArrow)" stroke="#2f8f12" stroke-width="1.6" stroke-linejoin="round"/>
<g transform="translate(1438 178) rotate(-41.8)">
<path d="M0 0L10 -2.604V2.604Z" fill="#5a5a5a"/>
<rect x="10" y="-3.1" width="16.09094155107152" height="6.2" fill="#202020"/>
<rect x="26.09094155107152" y="-3.1" width="24.193250796026987" height="6.2" rx="2.5" fill="#f4f4f4" stroke="#202020" stroke-width="1.6"/>
</g>
<rect x="1571" y="135.5" width="44" height="53.5" rx="1.5" fill="#e1e1e1" stroke="#a9a9a9" stroke-width="2"/>
<rect x="1578" y="161" width="5" height="1.2" fill="#b8b8b8"/><rect x="1585" y="161" width="6" height="1.2" fill="#b8b8b8"/>
<rect x="1578" y="165" width="5" height="1.2" fill="#b8b8b8"/><rect x="1585" y="165" width="6" height="1.2" fill="#b8b8b8"/>
<rect x="1578" y="169" width="5" height="1.2" fill="#b8b8b8"/><rect x="1585" y="169" width="6" height="1.2" fill="#b8b8b8"/>
<path d="M1575 178.5l3 -1.5l2 1l3 -2l3 2.5" stroke="#9a9a9a" stroke-width="1.2" fill="none"/>
<path d="M1564.5 129H1592V137.5H1580L1594.5 152L1588.5 158L1573 143V156H1564.5Z" fill="#cfcfcf" stroke="#a9a9a9" stroke-width="1.6" stroke-linejoin="round"/>
<g transform="translate(1588 178) rotate(-42.2)">
<path d="M0 0L10 -2.604V2.604Z" fill="#b4b4b4"/>
<rect x="10" y="-3.1" width="16.197975182102237" height="6.2" fill="#9a9a9a"/>
<rect x="26.197975182102237" y="-3.1" width="24.420697261967256" height="6.2" rx="2.5" fill="#dcdcdc" stroke="#9a9a9a" stroke-width="1.6"/>
</g>
<circle cx="1720" cy="160.3" r="31" fill="#c9c9c9" stroke="#b9b9b9" stroke-width="2"/>
<circle cx="1720" cy="160.3" r="26" fill="url(#gClock)" stroke="#dcdcdc" stroke-width="1.5"/>
<circle cx="1720.0" cy="138.8" r="1.3" fill="#b0b0b0"/>
<circle cx="1730.8" cy="141.7" r="0.9" fill="#b0b0b0"/>
<circle cx="1738.6" cy="149.6" r="0.9" fill="#b0b0b0"/>
<circle cx="1741.5" cy="160.3" r="1.3" fill="#b0b0b0"/>
<circle cx="1738.6" cy="171.1" r="0.9" fill="#b0b0b0"/>
<circle cx="1730.8" cy="178.9" r="0.9" fill="#b0b0b0"/>
<circle cx="1720.0" cy="181.8" r="1.3" fill="#b0b0b0"/>
<circle cx="1709.2" cy="178.9" r="0.9" fill="#b0b0b0"/>
<circle cx="1701.4" cy="171.1" r="0.9" fill="#b0b0b0"/>
<circle cx="1698.5" cy="160.3" r="1.3" fill="#b0b0b0"/>
<circle cx="1701.4" cy="149.6" r="0.9" fill="#b0b0b0"/>
<circle cx="1709.2" cy="141.7" r="0.9" fill="#b0b0b0"/>
<rect x="1718.5" y="141" width="3" height="21" fill="#b2b2b2"/><rect x="1718.5" y="158.8" width="15" height="3" fill="#b2b2b2"/><circle cx="1720" cy="160.3" r="3.4" fill="#b2b2b2"/>
</svg>
<div class="t d c" style="left:-138px;top:201.4px;width:400px;letter-spacing:-1.53px;">Save</div>
<div class="t d c" style="left:-138px;top:227.4px;width:400px;letter-spacing:-1.32px;">Changes</div>
<div class="t rb c" style="left:-24px;top:201.4px;width:400px;letter-spacing:-1.26px;">Change</div>
<div class="t rb c" style="left:-24px;top:227.4px;width:400px;letter-spacing:-1.18px;">Username</div>
<div class="t rb c" style="left:96px;top:201.4px;width:400px;letter-spacing:-1.26px;">Change</div>
<div class="t rb c" style="left:96px;top:227.4px;width:400px;letter-spacing:-1.16px;">Password</div>
<div class="t rb c" style="left:200px;top:201.4px;width:400px;letter-spacing:-0.52px;">Print</div>
<div class="t rb c" style="left:200px;top:227.4px;width:400px;letter-spacing:-1.21px;">User</div>
<div class="t rb c" style="left:296px;top:201.4px;width:400px;letter-spacing:-0.95px;">Logon</div>
<div class="t rb c" style="left:296px;top:227.4px;width:400px;letter-spacing:-0.45px;">To Web</div>
<div class="t rb c" style="left:439px;top:201.4px;width:400px;letter-spacing:-0.93px;">New Request</div>
<svg class="r" style="left:634.5px;top:236px" width="9" height="5" viewBox="0 0 9 5"><path d="M0 0H9L4.5 5Z" fill="#222"/></svg>
<div class="t rb c" style="left:630px;top:201.4px;width:400px;letter-spacing:-0.47px;">New Appointment</div>
<div class="t rb c" style="left:792px;top:201.4px;width:400px;letter-spacing:-0.91px;">Unclear</div>
<div class="t rb c" style="left:792px;top:227.4px;width:400px;letter-spacing:-1.21px;">User</div>
<div class="t rb c" style="left:887px;top:201.4px;width:400px;letter-spacing:-1.04px;">Block</div>
<div class="t rb c" style="left:887px;top:227.4px;width:400px;letter-spacing:-1.21px;">User</div>
<div class="t rb c" style="left:985px;top:201.4px;width:400px;letter-spacing:-0.90px;">Disavow</div>
<div class="t rb c" style="left:985px;top:227.4px;width:400px;letter-spacing:-1.21px;">User</div>
<div class="t rb c" style="left:1098px;top:201.4px;width:400px;letter-spacing:-0.90px;">Mark User</div>
<div class="t rb c" style="left:1098px;top:227.4px;width:400px;letter-spacing:-0.28px;">Inactive</div>
<div class="t rb c" style="left:1245px;top:201.4px;width:400px;letter-spacing:-0.75px;">Sign User In</div>
<svg class="r" style="left:1440.5px;top:236px" width="9" height="5" viewBox="0 0 9 5"><path d="M0 0H9L4.5 5Z" fill="#222"/></svg>
<div class="t d c" style="left:1395px;top:201.4px;width:400px;letter-spacing:-0.78px;">Sign User Out</div>
<div class="t d c" style="left:1518px;top:201.4px;width:400px;letter-spacing:-0.93px;">Away</div>
<div class="t rb c" style="left:75px;top:269.4px;width:400px;letter-spacing:-1.18px;">Manage</div>
<div class="t rb c" style="left:438px;top:269.4px;width:400px;letter-spacing:-0.77px;">Requests</div>
<div class="t rb c" style="left:629px;top:269.4px;width:400px;letter-spacing:-0.68px;">Appointments</div>
<div class="t rb c" style="left:1154px;top:269.4px;width:400px;letter-spacing:-1.57px;">Access</div>
<div class="r" style="left:554px;top:129px;width:2px;height:159px;background:#d2d2d2;"></div>
<div class="r" style="left:724px;top:129px;width:2px;height:159px;background:#d2d2d2;"></div>
<div class="r" style="left:1366px;top:132px;width:2px;height:116px;background:#d2d2d2;"></div>
<div class="r" style="left:937px;top:113px;width:827px;height:175px;border:7px solid #f0460a"></div>
<div class="r" style="left:0px;top:350px;width:1984px;height:2px;background:#c3c3c3;"></div>
<div class="r" style="left:1px;top:352px;width:2px;height:1049px;background:#c3c3c3;"></div>
<div class="r" style="left:1982px;top:352px;width:2px;height:1049px;background:#c3c3c3;"></div>
<div class="r" style="left:1px;top:1400px;width:1983px;height:2px;background:#c3c3c3;"></div>
<div class="r" style="left:0px;top:300px;width:1px;height:1144px;background:#e4e0dc;"></div>
<div class="r" style="left:1px;top:308px;width:97px;height:42px;border:2px solid #c3c3c3;border-bottom:none;background:#f0f0f0"></div>
<div class="t " style="left:23px;top:317.4px;letter-spacing:-0.80px;">Detail</div>
<div class="t " style="left:121px;top:317.4px;letter-spacing:-0.53px;">History</div>
<div class="t " style="left:233px;top:317.4px;letter-spacing:-1.05px;">Proxies</div>
<div class="t " style="left:347px;top:317.4px;letter-spacing:-1.12px;">Billing</div>
<div class="t " style="left:443px;top:317.4px;letter-spacing:-0.85px;">Billing Accounts</div>
<div class="t " style="left:633px;top:317.4px;letter-spacing:-0.59px;">Attachments</div>
<div class="t " style="left:799px;top:317.4px;letter-spacing:-0.68px;">Appointments</div>
<div class="t " style="left:975px;top:317.4px;letter-spacing:-0.77px;">Requests</div>
<div class="gb" style="left:8px;top:380px;width:1598px;height:285px"></div>
<div class="t gt" style="left:31px;top:365.4px;letter-spacing:-0.17px;">Identification</div>
<div class="t " style="left:31px;top:427.4px;letter-spacing:-1.18px;">Username</div>
<div class="t " style="left:31px;top:473.4px;letter-spacing:-0.41px;">Date of Birth</div>
<div class="t " style="left:31px;top:519.4px;letter-spacing:-0.99px;">ID Number</div>
<div class="t " style="left:31px;top:565.4px;letter-spacing:-0.79px;">Alt ID Number</div>
<div class="t " style="left:31px;top:611.4px;letter-spacing:-0.66px;">Organization</div>
<div class="t " style="left:871px;top:427.4px;letter-spacing:-1.02px;">First Name</div>
<div class="t " style="left:871px;top:473.4px;letter-spacing:-1.22px;">Last Name</div>
<div class="t " style="left:871px;top:519.4px;letter-spacing:-0.29px;">ID Type</div>
<div class="t " style="left:871px;top:565.4px;letter-spacing:-0.31px;">Alt ID Type</div>
<div class="t " style="left:871px;top:611.4px;letter-spacing:-0.44px;">Aeon Authentication</div>
<div class="in g" style="left:236px;top:420px;width:628px;height:40px;"></div>
<div class="t " style="left:243.5px;top:427.1px;letter-spacing:-0.81px;">bdegail</div>
<div class="in" style="left:236px;top:466px;width:628px;height:40px;"></div>
<div class="r" style="left:830px;top:468px;width:32px;height:36px;background:#f0f0f0;"></div>
<div class="r" style="left:830px;top:468px;width:2px;height:36px;background:#ababab;"></div>
<svg class="r" style="left:840.5px;top:482.25px" width="13" height="7.5" viewBox="0 0 13 7.5"><path d="M0 0H13L6.5 7.5Z" fill="#686868"/></svg>
<div class="in" style="left:236px;top:512px;width:628px;height:40px;"></div>
<div class="in" style="left:236px;top:558px;width:628px;height:40px;"></div>
<div class="in" style="left:236px;top:604px;width:628px;height:40px;"></div>
<div class="t " style="left:243.5px;top:611.1px;letter-spacing:-0.54px;">University Archives</div>
<div class="in" style="left:1076px;top:420px;width:506px;height:40px;"></div>
<div class="t " style="left:1083.5px;top:427.1px;letter-spacing:-0.25px;">Brittany</div>
<div class="in" style="left:1076px;top:466px;width:506px;height:40px;"></div>
<div class="t " style="left:1083.5px;top:473.1px;letter-spacing:-1.20px;">de Gail</div>
<div class="in" style="left:1076px;top:512px;width:506px;height:40px;"></div>
<div class="r" style="left:1548px;top:514px;width:32px;height:36px;background:#f0f0f0;"></div>
<div class="r" style="left:1548px;top:514px;width:2px;height:36px;background:#ababab;"></div>
<svg class="r" style="left:1558.5px;top:528.25px" width="13" height="7.5" viewBox="0 0 13 7.5"><path d="M0 0H13L6.5 7.5Z" fill="#686868"/></svg>
<div class="t " style="left:1083.5px;top:519.1px;letter-spacing:-1.28px;">Campus ID</div>
<div class="in" style="left:1076px;top:558px;width:506px;height:40px;"></div>
<div class="r" style="left:1548px;top:560px;width:32px;height:36px;background:#f0f0f0;"></div>
<div class="r" style="left:1548px;top:560px;width:2px;height:36px;background:#ababab;"></div>
<svg class="r" style="left:1558.5px;top:574.25px" width="13" height="7.5" viewBox="0 0 13 7.5"><path d="M0 0H13L6.5 7.5Z" fill="#686868"/></svg>
<div class="in" style="left:1078px;top:610px;width:26px;height:26px;"></div>
<svg class="r" style="left:1078px;top:610px" width="26" height="26" viewBox="0 0 26 26"><path d="M4.9 15L9.1 20.3L21 6.9" stroke="#5c5c5c" stroke-width="2.3" stroke-linecap="round" stroke-linejoin="round" fill="none"/></svg>
<div class="gb" style="left:8px;top:696px;width:1598px;height:147px"></div>
<div class="t gt" style="left:31px;top:681.4px;letter-spacing:-0.30px;">Contact Information</div>
<div class="t " style="left:31px;top:743.4px;letter-spacing:-1.10px;">Phone</div>
<div class="t " style="left:31px;top:789.4px;letter-spacing:-1.70px;">Email</div>
<div class="in" style="left:122px;top:736px;width:446px;height:40px;"></div>
<div class="t " style="left:129.5px;top:743.1px;letter-spacing:-0.79px;">7570000000</div>
<div class="t " style="left:575px;top:743.4px;letter-spacing:-0.51px;">Fax</div>
<div class="in" style="left:666px;top:736px;width:342px;height:40px;"></div>
<div class="t " style="left:1015px;top:743.4px;letter-spacing:-0.55px;">Notification Method</div>
<div class="in" style="left:1210px;top:736px;width:372px;height:40px;"></div>
<div class="r" style="left:1548px;top:738px;width:32px;height:36px;background:#f0f0f0;"></div>
<div class="r" style="left:1548px;top:738px;width:2px;height:36px;background:#ababab;"></div>
<svg class="r" style="left:1558.5px;top:752.25px" width="13" height="7.5" viewBox="0 0 13 7.5"><path d="M0 0H13L6.5 7.5Z" fill="#686868"/></svg>
<div class="t " style="left:1217.5px;top:743.1px;letter-spacing:-1.70px;">Email</div>
<div class="in" style="left:122px;top:782px;width:1460px;height:40px;"></div>
<div class="t " style="left:129.5px;top:789.1px;letter-spacing:-0.86px;">bdegail@atlas-sys.com</div>
<div class="gb" style="left:8px;top:874px;width:738px;height:241px"></div>
<div class="t gt" style="left:31px;top:859.4px;letter-spacing:-0.78px;">Primary Address</div>
<div class="t " style="left:32px;top:921.4px;letter-spacing:-0.98px;">Address</div>
<div class="t " style="left:31px;top:1013.4px;letter-spacing:-0.53px;">City</div>
<div class="t " style="left:31px;top:1061.4px;letter-spacing:-0.98px;">Zip</div>
<div class="in" style="left:118px;top:914px;width:604px;height:40px;"></div>
<div class="t " style="left:125.5px;top:921.1px;letter-spacing:-0.58px;">5712 Cleveland Street</div>
<div class="in" style="left:118px;top:960px;width:604px;height:40px;"></div>
<div class="in" style="left:118px;top:1006px;width:332px;height:40px;"></div>
<div class="t " style="left:125.5px;top:1013.1px;letter-spacing:-1.14px;">Virginia Beach</div>
<div class="t " style="left:457px;top:1013.4px;letter-spacing:-0.24px;">State</div>
<div class="in" style="left:544px;top:1006px;width:178px;height:40px;"></div>
<div class="r" style="left:688px;top:1008px;width:32px;height:36px;background:#f0f0f0;"></div>
<div class="r" style="left:688px;top:1008px;width:2px;height:36px;background:#ababab;"></div>
<svg class="r" style="left:698.5px;top:1022.25px" width="13" height="7.5" viewBox="0 0 13 7.5"><path d="M0 0H13L6.5 7.5Z" fill="#686868"/></svg>
<div class="t " style="left:551.5px;top:1013.1px;letter-spacing:-1.49px;">VA</div>
<div class="in" style="left:118px;top:1054px;width:224px;height:40px;"></div>
<div class="t " style="left:125.5px;top:1061.1px;letter-spacing:-0.69px;">12345</div>
<div class="t " style="left:349px;top:1061.4px;letter-spacing:-0.29px;">Country</div>
<div class="in" style="left:436px;top:1054px;width:286px;height:40px;"></div>
<div class="r" style="left:656px;top:1056px;width:64px;height:36px;background:#f0f0f0;"></div>
<div class="r" style="left:656px;top:1056px;width:2px;height:36px;background:#ababab;"></div>
<div class="r" style="left:688px;top:1056px;width:2px;height:36px;background:#ababab;"></div>
<svg class="r" style="left:666.5px;top:1070.25px" width="13" height="7.5" viewBox="0 0 13 7.5"><path d="M0 0H13L6.5 7.5Z" fill="#686868"/></svg>
<svg class="r" style="left:695.8px;top:1066.2px" width="18.4" height="14.4" viewBox="0 0 18.4 14.4"><path d="M0.8 0H5.2L9.2 5L13.2 0H17.6L11.4 7.2L17.6 14.4H13.2L9.2 9.4L5.2 14.4H0.8L7 7.2Z" fill="#6c6c6c"/></svg>
<div class="t " style="left:443.5px;top:1061.1px;letter-spacing:-0.62px;">United States</div>
<div class="gb" style="left:754px;top:874px;width:712px;height:241px"></div>
<div class="t gt" style="left:777px;top:859.4px;letter-spacing:-0.76px;">Secondary Address</div>
<div class="t " style="left:778px;top:921.4px;letter-spacing:-0.98px;">Address</div>
<div class="t " style="left:777px;top:1013.4px;letter-spacing:-0.53px;">City</div>
<div class="t " style="left:777px;top:1061.4px;letter-spacing:-0.98px;">Zip</div>
<div class="in" style="left:864px;top:914px;width:578px;height:40px;"></div>
<div class="in" style="left:864px;top:960px;width:578px;height:40px;"></div>
<div class="in" style="left:864px;top:1006px;width:300px;height:40px;"></div>
<div class="t " style="left:1171px;top:1013.4px;letter-spacing:-0.24px;">State</div>
<div class="in" style="left:1258px;top:1006px;width:184px;height:40px;"></div>
<div class="r" style="left:1408px;top:1008px;width:32px;height:36px;background:#f0f0f0;"></div>
<div class="r" style="left:1408px;top:1008px;width:2px;height:36px;background:#ababab;"></div>
<svg class="r" style="left:1418.5px;top:1022.25px" width="13" height="7.5" viewBox="0 0 13 7.5"><path d="M0 0H13L6.5 7.5Z" fill="#686868"/></svg>
<div class="in" style="left:864px;top:1054px;width:190px;height:40px;"></div>
<div class="t " style="left:1061px;top:1061.4px;letter-spacing:-0.29px;">Country</div>
<div class="in" style="left:1148px;top:1054px;width:294px;height:40px;"></div>
<div class="r" style="left:1376px;top:1056px;width:64px;height:36px;background:#f0f0f0;"></div>
<div class="r" style="left:1376px;top:1056px;width:2px;height:36px;background:#ababab;"></div>
<div class="r" style="left:1408px;top:1056px;width:2px;height:36px;background:#ababab;"></div>
<svg class="r" style="left:1386.5px;top:1070.25px" width="13" height="7.5" viewBox="0 0 13 7.5"><path d="M0 0H13L6.5 7.5Z" fill="#686868"/></svg>
<svg class="r" style="left:1415.8px;top:1066.2px" width="18.4" height="14.4" viewBox="0 0 18.4 14.4"><path d="M0.8 0H5.2L9.2 5L13.2 0H17.6L11.4 7.2L17.6 14.4H13.2L9.2 9.4L5.2 14.4H0.8L7 7.2Z" fill="#6c6c6c"/></svg>
<div class="gb" style="left:1474px;top:874px;width:502px;height:373px"></div>
<div class="t gt" style="left:1497px;top:859.4px;letter-spacing:-0.45px;">Additional Information</div>
<div class="t " style="left:1497px;top:921.4px;letter-spacing:-0.52px;">Department</div>
<div class="t " style="left:1497px;top:967.4px;letter-spacing:-0.45px;">Status</div>
<div class="t " style="left:1497px;top:1013.4px;letter-spacing:-0.86px;">Request Limit</div>
<div class="t " style="left:1497px;top:1059.4px;letter-spacing:-0.58px;">Expiration Date</div>
<div class="t " style="left:1497px;top:1105.4px;letter-spacing:-0.81px;">Last Changed Date</div>
<div class="t " style="left:1497px;top:1151.4px;letter-spacing:-0.75px;">Clearance Status</div>
<div class="in" style="left:1690px;top:914px;width:262px;height:40px;"></div>
<div class="r" style="left:1918px;top:916px;width:32px;height:36px;background:#f0f0f0;"></div>
<div class="r" style="left:1918px;top:916px;width:2px;height:36px;background:#ababab;"></div>
<svg class="r" style="left:1928.5px;top:930.25px" width="13" height="7.5" viewBox="0 0 13 7.5"><path d="M0 0H13L6.5 7.5Z" fill="#686868"/></svg>
<div class="t " style="left:1697.5px;top:921.1px;letter-spacing:-1.61px;">Music</div>
<div class="in" style="left:1690px;top:960px;width:262px;height:40px;"></div>
<div class="r" style="left:1918px;top:962px;width:32px;height:36px;background:#f0f0f0;"></div>
<div class="r" style="left:1918px;top:962px;width:2px;height:36px;background:#ababab;"></div>
<svg class="r" style="left:1928.5px;top:976.25px" width="13" height="7.5" viewBox="0 0 13 7.5"><path d="M0 0H13L6.5 7.5Z" fill="#686868"/></svg>
<div class="t " style="left:1697.5px;top:967.1px;letter-spacing:-0.60px;">Independent Resea...</div>
<div class="in" style="left:1690px;top:1006px;width:262px;height:40px;"></div>
<div class="r" style="left:1918px;top:1008px;width:32px;height:36px;background:#f0f0f0;"></div>
<div class="r" style="left:1918px;top:1008px;width:2px;height:36px;background:#ababab;"></div>
<svg class="r" style="left:1925.8px;top:1018.2px" width="18.4" height="14.4" viewBox="0 0 18.4 14.4"><path d="M0.8 0H5.2L9.2 5L13.2 0H17.6L11.4 7.2L17.6 14.4H13.2L9.2 9.4L5.2 14.4H0.8L7 7.2Z" fill="#6c6c6c"/></svg>
<div class="in" style="left:1690px;top:1052px;width:262px;height:40px;"></div>
<div class="r" style="left:1918px;top:1054px;width:32px;height:36px;background:#f0f0f0;"></div>
<div class="r" style="left:1918px;top:1054px;width:2px;height:36px;background:#ababab;"></div>
<svg class="r" style="left:1928.5px;top:1068.25px" width="13" height="7.5" viewBox="0 0 13 7.5"><path d="M0 0H13L6.5 7.5Z" fill="#686868"/></svg>
<div class="t " style="left:1697.5px;top:1059.1px;letter-spacing:-0.21px;">10/26/2024</div>
<div class="in g" style="left:1690px;top:1098px;width:262px;height:40px;"></div>
<div class="r" style="left:1918px;top:1100px;width:32px;height:36px;background:#f0f0f0;"></div>
<div class="r" style="left:1918px;top:1100px;width:2px;height:36px;background:#ababab;"></div>
<svg class="r" style="left:1928.5px;top:1114.25px" width="13" height="7.5" viewBox="0 0 13 7.5"><path d="M0 0H13L6.5 7.5Z" fill="#686868"/></svg>
<div class="t " style="left:1697.5px;top:1105.1px;letter-spacing:-0.20px;">1/15/2024</div>
<div class="in g" style="left:1690px;top:1144px;width:262px;height:40px;"></div>
<div class="t " style="left:1697.5px;top:1151.1px;letter-spacing:-1.08px;">Cleared</div>
<div class="r" style="left:1476px;top:1138px;width:466px;height:34.5px;border:7px solid #f0460a"></div>
<div class="gb" style="left:8px;top:1146px;width:1458px;height:101px"></div>
<div class="t gt" style="left:31px;top:1131.4px;letter-spacing:-0.54px;">Research Information</div>
<div class="t " style="left:32px;top:1193.4px;letter-spacing:-0.87px;">Topics</div>
<div class="in" style="left:136px;top:1186px;width:1114px;height:40px;"></div>
<div class="t " style="left:143.5px;top:1193.1px;letter-spacing:-0.32px;">Literature, History</div>
<div class="t " style="left:1257px;top:1193.4px;letter-spacing:-0.98px;">Shareable</div>
<div class="in" style="left:1364px;top:1192px;width:26px;height:26px;"></div>
<svg class="r" style="left:1364px;top:1192px" width="26" height="26" viewBox="0 0 26 26"><path d="M4.9 15L9.1 20.3L21 6.9" stroke="#5c5c5c" stroke-width="2.3" stroke-linecap="round" stroke-linejoin="round" fill="none"/></svg>
<div class="r" style="left:7px;top:1256px;width:1965px;height:133px;border:2px solid #ababab;background:#fff"></div>
<div class="r" style="left:9px;top:1258px;width:1965px;height:38px;background:#f0f0f0;"></div>
<div class="r" style="left:9px;top:1296px;width:1965px;height:2px;background:#a8a8a8;"></div>
<div class="r" style="left:9px;top:1298px;width:1931px;height:36px;background:#e3eef8;"></div>
<div class="r" style="left:9px;top:1334px;width:1931px;height:2px;background:#d4d4d4;"></div>
<div class="r" style="left:9px;top:1372px;width:1931px;height:2px;background:#d4d4d4;"></div>
<div class="r" style="left:281px;top:1258px;width:2px;height:38px;background:#ababab;"></div>
<div class="r" style="left:1675px;top:1258px;width:2px;height:38px;background:#ababab;"></div>
<div class="r" style="left:1940px;top:1258px;width:2px;height:38px;background:#ababab;"></div>
<div class="r" style="left:281px;top:1298px;width:2px;height:93px;background:#d0d0d0;"></div>
<div class="r" style="left:1675px;top:1298px;width:2px;height:93px;background:#d0d0d0;"></div>
<div class="r" style="left:1940px;top:1298px;width:34px;height:93px;background:#eaeaea;"></div>
<div class="r" style="left:1940px;top:1333px;width:34px;height:24px;background:#cdcdcd;"></div>
<svg class="r" style="left:1949px;top:1307px" width="16" height="13" viewBox="0 0 16 13"><path d="M1.6 11L8 3L14.4 11" stroke="#6a6a6a" stroke-width="3.6" fill="none"/></svg>
<svg class="r" style="left:1949px;top:1369px" width="16" height="13" viewBox="0 0 16 13"><path d="M1.6 2L8 10L14.4 2" stroke="#6a6a6a" stroke-width="3.6" fill="none"/></svg>
<div class="t " style="left:15px;top:1263.4px;letter-spacing:-0.40px;">Date</div>
<div class="t " style="left:289px;top:1263.4px;letter-spacing:-0.65px;">Note</div>
<div class="t " style="left:1683px;top:1263.4px;letter-spacing:-1.09px;">Added By</div>
<div class="r" style="left:9px;top:1298px;width:1965px;height:93px;overflow:hidden">
<div class="t " style="left:9px;top:3.4px;letter-spacing:-0.70px;color:#222">1/15/2024 3:12 PM</div>
<div class="t " style="left:282px;top:3.4px;letter-spacing:-0.36px;color:#222">User cleared by staff.</div>
<div class="t " style="left:1674px;top:3.4px;letter-spacing:-1.13px;color:#222">admin</div>
<div class="t " style="left:9px;top:41.4px;letter-spacing:-0.70px;color:#222">1/15/2024 2:46 PM</div>
<div class="t " style="left:282px;top:41.4px;letter-spacing:-0.40px;color:#222">User uncleared by staff.</div>
<div class="t " style="left:1674px;top:41.4px;letter-spacing:-1.13px;color:#222">admin</div>
<div class="t " style="left:9px;top:79.4px;letter-spacing:-0.70px;color:#222">1/15/2024 2:35 PM</div>
<div class="t " style="left:282px;top:79.4px;letter-spacing:-0.40px;color:#222">User blocked by staff.</div>
<div class="t " style="left:1674px;top:79.4px;letter-spacing:-1.13px;color:#222">admin</div>
</div>
<div class="r" style="left:0px;top:1404px;width:1984px;height:2px;background:#c6c6c6;"></div>
<div class="r" style="left:0px;top:1406px;width:1984px;height:1px;background:#f6f6f6;"></div>
<div class="t " style="left:9px;top:1412.4px;letter-spacing:-0.44px;">6 requests</div>
<div class="r" style="left:1978px;top:1428px;width:4px;height:4px;background:#484848;"></div>
<div class="r" style="left:1972px;top:1434px;width:4px;height:4px;background:#484848;"></div>
<div class="r" style="left:1978px;top:1434px;width:4px;height:4px;background:#484848;"></div>
<div class="r" style="left:1966px;top:1440px;width:4px;height:4px;background:#484848;"></div>
<div class="r" style="left:1972px;top:1440px;width:4px;height:4px;background:#484848;"></div>
<div class="r" style="left:1978px;top:1440px;width:4px;height:4px;background:#484848;"></div>
<div class="r" style="left:1614px;top:358px;width:358px;height:479px;border:2px solid #a6a6a6;background:#fff"></div>
<svg class="r" style="left:1616px;top:360px" width="358" height="479" viewBox="1616 360 358 479">
<defs>
<linearGradient id="pb" x1="0" y1="0" x2="0" y2="1"><stop offset="0" stop-color="#dedede"/><stop offset="1" stop-color="#c4c4c4"/></linearGradient>
<linearGradient id="ph" x1="0.3" y1="0" x2="0.7" y2="1"><stop offset="0" stop-color="#e5e5e5"/><stop offset="1" stop-color="#d6d6d6"/></linearGradient>
<clipPath id="pc"><rect x="1616" y="360" width="358" height="474"/></clipPath>
</defs>
<g clip-path="url(#pc)">
<path d="M1619 836C1624 745 1668 682 1729 659L1790 700L1853 659C1916 682 1964 745 1970 836Z" fill="url(#pb)" stroke="#b2b2b2" stroke-width="5.5" stroke-linejoin="round"/>
<path d="M1722.5 664L1790.5 812L1864.5 664L1830 640L1760 640Z" fill="#fff"/>
<ellipse cx="1790" cy="576.8" rx="87.6" ry="104.2" fill="url(#ph)" stroke="#c7c7c7" stroke-width="4.5"/>
<rect x="1616" y="829.5" width="358" height="5" fill="#b2b2b2"/>
</g>
</svg>
</div>
</body></html>
